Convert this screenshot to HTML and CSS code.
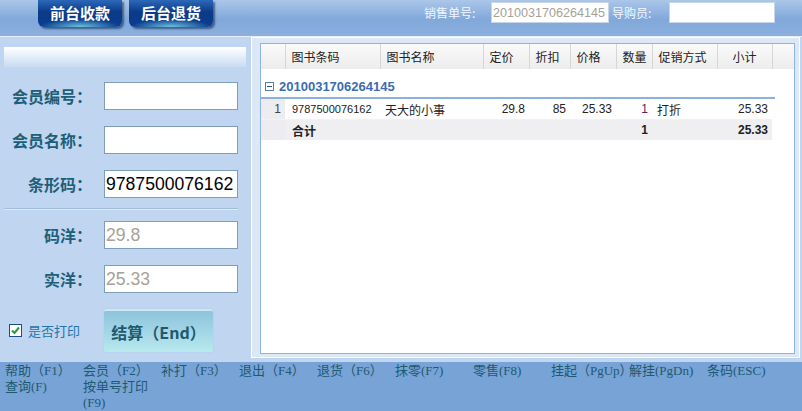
FILE: index.html
```html
<!DOCTYPE html>
<html lang="zh-CN">
<head>
  <meta charset="UTF-8">
  <title>前台收款</title>
  <link rel="stylesheet" href="styles.css">
</head>
<body>

  <!-- Barre du haut -->
  <div class="topbar">
    <div class="tabs">
      <a class="tab" href="#">前台收款</a>
      <a class="tab" href="#">后台退货</a>
    </div>
    <div class="order">
      <span class="order-label">销售单号:</span>
      <input class="order-no" type="text" value="2010031706264145" readonly>
      <span class="order-label guide">导购员:</span>
      <input class="order-guide" type="text">
    </div>
  </div>

  <div class="main">
    <!-- Panneau de saisie -->
    <div class="side">
      <div class="side-head"></div>

      <div class="field">
        <label>会员编号：</label>
        <input type="text">
      </div>
      <div class="field">
        <label>会员名称：</label>
        <input type="text">
      </div>
      <div class="field">
        <label>条形码：</label>
        <input type="text" value="9787500076162">
      </div>

      <div class="divider"></div>

      <div class="field">
        <label>码洋：</label>
        <input class="ro" type="text" value="29.8" readonly>
      </div>
      <div class="field">
        <label>实洋：</label>
        <input class="ro" type="text" value="25.33" readonly>
      </div>

      <div class="actions">
        <label class="print">
          <span class="check">
            <svg width="9" height="9" viewBox="0 0 9 9"><path d="M1 4.5 L3.5 7 L8 1.5" fill="none" stroke="#22a038" stroke-width="2"/></svg>
          </span>
          是否打印
        </label>
        <button class="pay">结算（End）</button>
      </div>
    </div>

    <!-- Grille des articles -->
    <div class="panel">
      <div class="grid">
        <table class="sheet head">
          <colgroup>
            <col class="c-rn"><col class="c-code"><col class="c-name"><col class="c-price"><col class="c-disc">
            <col class="c-real"><col class="c-qty"><col class="c-promo"><col class="c-sub"><col class="c-fill">
          </colgroup>
          <tr>
            <th></th><th>图书条码</th><th>图书名称</th><th>定价</th><th>折扣</th>
            <th>价格</th><th>数量</th><th>促销方式</th><th class="center">小计</th><th class="fill"></th>
          </tr>
        </table>

        <div class="group">
          <span class="toggle"></span>
          <span class="group-no">2010031706264145</span>
        </div>

        <table class="sheet body">
          <colgroup>
            <col class="c-rn"><col class="c-code"><col class="c-name"><col class="c-price"><col class="c-disc">
            <col class="c-real"><col class="c-qty"><col class="c-promo"><col class="c-sub">
          </colgroup>
          <tr class="row">
            <td class="rn">1</td>
            <td class="code">9787500076162</td>
            <td class="cn">天大的小事</td>
            <td class="num">29.8</td>
            <td class="num">85</td>
            <td class="num">25.33</td>
            <td class="num qty">1</td>
            <td class="cn">打折</td>
            <td class="num">25.33</td>
          </tr>
          <tr class="total">
            <td class="rn"></td>
            <td class="cn">合计</td>
            <td></td><td></td><td></td><td></td>
            <td class="num">1</td>
            <td></td>
            <td class="num">25.33</td>
          </tr>
        </table>
      </div>
    </div>
  </div>

  <!-- Raccourcis clavier -->
  <div class="footer">
    <div class="key">帮助（F1）<br>查询(F)</div>
    <div class="key">会员（F2）<br>按单号打印<br>(F9)</div>
    <div class="key">补打（F3）</div>
    <div class="key">退出（F4）</div>
    <div class="key">退货（F6）</div>
    <div class="key">抹零(F7)</div>
    <div class="key">零售(F8)</div>
    <div class="key">挂起（PgUp）</div>
    <div class="key">解挂(PgDn)</div>
    <div class="key">条码(ESC)</div>
  </div>

</body>
</html>
```

FILE: styles.css
```css
body {
  margin: 0;
  width: 802px;
  height: 411px;
  overflow: hidden;
  font-family: "Liberation Sans", "Noto Sans CJK SC", sans-serif;
  background-color: #c0d5f0;
}
.topbar {
  display: flex;
  align-items: flex-start;
  height: 36px;
  border-bottom: 1px solid #e6eef9;
  background: linear-gradient(#abc6e8, #80a8da 55%, #8cb0de);
}
.tabs {
  display: flex;
  gap: 7px;
  margin-left: 38px;
}
.tab {
  display: block;
  width: 84px;
  height: 27px;
  line-height: 25px;
  text-align: center;
  color: white;
  font-family: "Noto Sans CJK SC", sans-serif;
  font-weight: bold;
  font-size: 15px;
  text-decoration: none;
  border-radius: 0 0 6px 6px;
  background:
    radial-gradient(ellipse 40px 8px at 50% 100%, rgba(120, 210, 235, 0.9), rgba(120, 210, 235, 0) 100%),
    linear-gradient(#2d68b8, #0a3a88 45%, #0b3e8e);
  box-shadow: 2px 2px 2px rgba(10, 30, 70, 0.55);
}
.order {
  display: flex;
  align-items: center;
  margin-left: auto;
  margin-right: 27px;
  padding-top: 2px;
}
.order-label {
  width: 67px;
  color: #f2f6ff;
  font-family: "Noto Sans CJK SC", sans-serif;
  font-size: 12px;
}
.order-label.guide {
  width: 57px;
  margin-left: 3px;
}
.order input {
  box-sizing: border-box;
  height: 21px;
  border: 1px solid #c8d6e8;
  background: white;
  padding: 0 1px;
  font-family: "Liberation Sans", sans-serif;
  font-size: 12.6px;
  color: #a8a098;
}
.order-no {
  width: 118px;
}
.order-guide {
  width: 106px;
}

.main {
  display: flex;
  height: 325px;
}
.side {
  width: 250px;
  padding-top: 10px;
  box-sizing: border-box;
  background-color: #c0d5f0;
}
.side-head {
  margin: 0 4px 15px 4px;
  height: 20px;
  background: linear-gradient(#ffffff, #c8dbf2);
}
.field {
  display: flex;
  align-items: center;
  height: 28px;
  margin-bottom: 16px;
}
.field label {
  width: 92px;
  text-align: right;
  font-family: "Noto Sans CJK SC", sans-serif;
  font-weight: bold;
  font-size: 16px;
  color: #1d5f78;
  white-space: nowrap;
}
.field input {
  box-sizing: border-box;
  width: 134px;
  height: 28px;
  margin-left: 12px;
  border: 1px solid #7f9db9;
  padding: 0 1px;
  font-family: "Liberation Sans", sans-serif;
  font-size: 17.6px;
  color: #000;
  background: white;
}
.field input.ro {
  color: #a8a196;
}
.divider {
  margin: -6px 12px 11px 4px;
  height: 1px;
  background-color: #a3bddc;
  border-bottom: 1px solid #dde9f7;
}
.actions {
  display: flex;
  align-items: center;
  margin-top: 1px;
}
.print {
  display: flex;
  align-items: center;
  width: 104px;
  padding-left: 9px;
  font-family: "Noto Sans CJK SC", sans-serif;
  font-size: 13px;
  color: #2175a8;
  box-sizing: border-box;
}
.check {
  display: flex;
  align-items: center;
  justify-content: center;
  box-sizing: border-box;
  width: 13px;
  height: 13px;
  margin-right: 6px;
  border: 1px solid #1c4e80;
  background: white;
}
.pay {
  width: 109px;
  height: 43px;
  border: none;
  border-radius: 2px;
  font-family: "Noto Sans CJK SC", sans-serif;
  font-weight: bold;
  font-size: 16px;
  color: #1d5a70;
  background: linear-gradient(#8cc2da, #a4d6e6 55%, #b8eaee);
  box-shadow: inset 0 3px 0 -1px #cfe6f0, 0 0 2px #a8cce6;
  padding: 2px 0 0 0;
}

.panel {
  margin-left: 1px;
  width: 549px;
  height: 321px;
  box-sizing: border-box;
  padding: 5px 4px 3px 8px;
  border: 1px solid #ffffff;
  background-color: #dce8f6;
}
.grid {
  height: 100%;
  box-sizing: border-box;
  border: 1px solid #8db4e6;
  background: white;
}
.sheet {
  border-collapse: collapse;
  table-layout: fixed;
  font-size: 12px;
  color: #222;
}
.sheet.head {
  width: 533px;
}
.sheet.body {
  width: 511px;
}
.c-rn { width: 24px; }
.c-code { width: 95px; }
.c-name { width: 103px; }
.c-price { width: 46px; }
.c-disc { width: 41px; }
.c-real { width: 46px; }
.c-qty { width: 36px; }
.c-promo { width: 65px; }
.c-sub { width: 55px; }
.c-fill { width: 22px; }
.sheet th {
  height: 25px;
  padding: 0 0 0 6px;
  text-align: left;
  font-weight: normal;
  font-family: "Noto Sans CJK SC", sans-serif;
  border-right: 1px solid #d6d6d6;
  background: linear-gradient(#fafafa, #ececec);
}
.sheet th.center {
  text-align: center;
  padding: 0;
}
.sheet th.fill {
  border-right: none;
}
.group {
  display: flex;
  align-items: center;
  width: 514px;
  height: 21px;
  margin-top: 7px;
  border-bottom: 2px solid #8cb0e0;
}
.toggle {
  position: relative;
  box-sizing: border-box;
  width: 9px;
  height: 9px;
  margin: 0 5px 0 4px;
  border: 1px solid #5c7ea8;
  background: white;
}
.toggle::after {
  content: "";
  position: absolute;
  left: 1px;
  right: 1px;
  top: 3px;
  height: 1px;
  background-color: #2a4f80;
}
.group-no {
  font-weight: bold;
  font-size: 13px;
  color: #3b6cb2;
}
.sheet td {
  height: 20px;
  padding: 0 4px 0 7px;
  white-space: nowrap;
  overflow: hidden;
}
.sheet td.rn {
  padding: 0 4px 0 0;
  text-align: right;
  background-color: #ededf1;
  color: #444;
}
.sheet td.cn {
  font-family: "Noto Sans CJK SC", sans-serif;
  font-size: 12px;
  padding-left: 5px;
}
.sheet td.code {
  padding-left: 7px;
  font-size: 11px;
}
.sheet td.num {
  text-align: right;
}
.row td {
  border-bottom: 1px solid #f2f2f4;
}
.row td.qty {
  color: #5a1f5a;
}
.total td {
  background-color: #efeff2;
  font-weight: bold;
}
.total td.cn {
  padding-left: 7px;
}

.footer {
  display: flex;
  height: 49px;
  padding: 1px 0 0 5px;
  box-sizing: border-box;
  background-color: #78a3d7;
}
.key {
  width: 78px;
  flex-shrink: 0;
  white-space: nowrap;
  font-family: "Liberation Serif", "Noto Sans CJK SC", serif;
  font-size: 13px;
  line-height: 16px;
  color: #1d5a70;
}
```
